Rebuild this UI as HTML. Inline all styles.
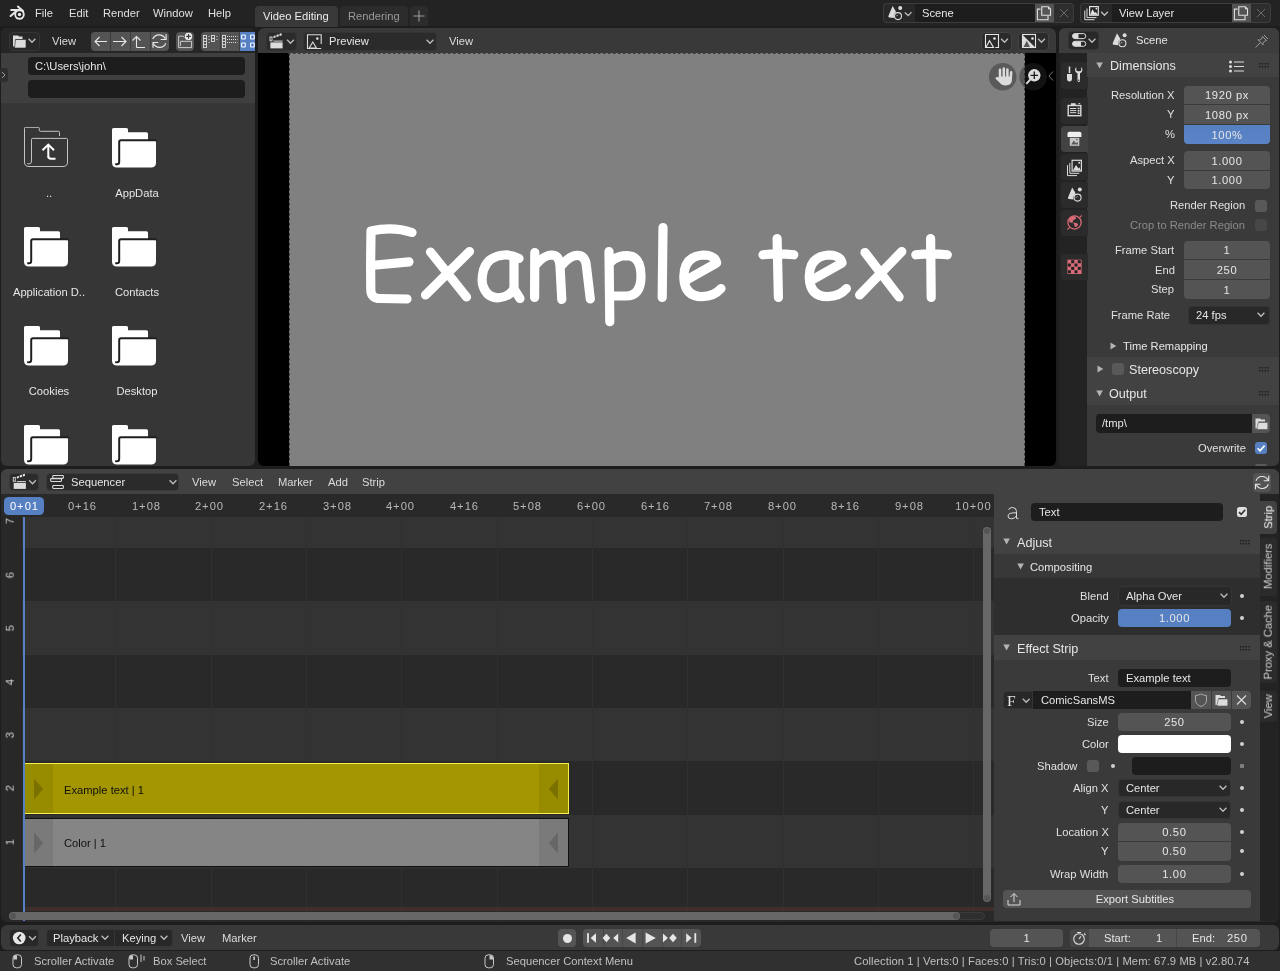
<!DOCTYPE html><html><head><meta charset="utf-8"><style>
html,body{margin:0;padding:0;width:1280px;height:971px;overflow:hidden;background:#1d1d1d;}
body{position:relative;font-family:"Liberation Sans", sans-serif;}
div,svg{position:absolute;box-sizing:border-box;}
.t{white-space:nowrap;line-height:1.117em;will-change:transform;}
</style></head><body>

<div style="left:0px;top:0px;width:1280px;height:26px;background:#232323;"></div>
<svg style="left:6px;top:3px;" width="24" height="21" viewBox="0 0 24 21"><g stroke="#e8e8e8" stroke-width="2" fill="none" stroke-linecap="round"><path d="M11.9 3.6 L17.2 8.2"/><path d="M5.2 6.9 H15.6"/><path d="M4.6 13 L9.8 8.6"/></g>
<circle cx="13.5" cy="11.5" r="5.2" fill="#e8e8e8"/><circle cx="13.5" cy="11.5" r="3.3" fill="#161616"/><circle cx="13.5" cy="11.5" r="1.8" fill="#e8e8e8"/></svg>
<div class="t" style="left:35.3px;top:6.86px;font-size:11.2px;color:#e0e0e0;">File</div>
<div class="t" style="left:68.5px;top:6.86px;font-size:11.2px;color:#e0e0e0;">Edit</div>
<div class="t" style="left:102.5px;top:6.86px;font-size:11.2px;color:#e0e0e0;">Render</div>
<div class="t" style="left:152.5px;top:6.86px;font-size:11.2px;color:#e0e0e0;">Window</div>
<div class="t" style="left:207.5px;top:6.86px;font-size:11.2px;color:#e0e0e0;">Help</div>
<div style="left:255px;top:6px;width:83px;height:21px;background:#393939;border-radius:4px 4px 0 0;"></div>
<div class="t" style="left:263px;top:9.86px;font-size:11.2px;color:#ececec;">Video Editing</div>
<div style="left:340px;top:6px;width:68px;height:20px;background:#2c2c2c;border-radius:4px 4px 0 0;"></div>
<div class="t" style="left:348.3px;top:9.86px;font-size:11.2px;color:#9a9a9a;">Rendering</div>
<div style="left:410px;top:6px;width:18px;height:20px;background:#2c2c2c;border-radius:4px 4px 0 0;"></div>
<svg style="left:410px;top:6px;" width="18" height="20" viewBox="0 0 18 20"><path d="M9 4.5V15.5M3.5 10H14.5" stroke="#9a9a9a" stroke-width="1.1"/></svg>
<div style="left:883px;top:3px;width:191px;height:19.5px;background:#3d3d3d;border-radius:4px;"></div>
<div style="left:884px;top:4px;width:31px;height:17.5px;background:#282828;border-radius:3px 0 0 3px;"></div>
<div style="left:915px;top:4px;width:120px;height:17.5px;background:#1d1d1d;"></div>
<div style="left:1035px;top:4px;width:19px;height:17.5px;background:#545454;"></div>
<div style="left:1054px;top:4px;width:19px;height:17.5px;background:#2d2d2d;border-radius:0 3px 3px 0;"></div>
<div class="t" style="left:921.5px;top:6.86px;font-size:11.2px;color:#e6e6e6;">Scene</div>
<svg style="left:884px;top:4px;" width="31" height="17" viewBox="0 0 31 17"><g transform="translate(4.1,2)"><path d="M4.5 0 L7.8 5.6 L5.6 12.1 L1.3 11.6 Q-0.3 11.3 0.3 9.9Z" fill="#dcdcdc"/><circle cx="12.1" cy="2" r="2" fill="#dcdcdc"/><circle cx="9.9" cy="10.1" r="4.2" fill="#282828"/><circle cx="9.9" cy="10.1" r="3.5" fill="#282828" stroke="#dcdcdc" stroke-width="1.1"/><path d="M8.3 10.2 L9.6 8.9" stroke="#dcdcdc" stroke-width="0.9"/></g><path d="M20.8 8.4L24.3 11.6L27.5 8.1" fill="none" stroke="#bdbdbd" stroke-width="1.3"/></svg>
<svg style="left:1035px;top:4px;" width="19" height="17" viewBox="0 0 19 17"><path d="M6.75 2.8 H13.3 L15.5 5 V11.3 H6.75 Z M5.5 5.1 H2.4 V15.7 H13 V12" fill="none" stroke="#e0e0e0" stroke-width="1.1"/><path d="M13 2.8 L15.5 5.3 H13Z" fill="#e0e0e0"/></svg>
<svg style="left:1054px;top:4px;" width="20" height="17" viewBox="0 0 20 17"><path d="M6 5L14 13M14 5L6 13" stroke="#6a6a6a" stroke-width="1"/></svg>
<div style="left:1080px;top:3px;width:191px;height:19.5px;background:#3d3d3d;border-radius:4px;"></div>
<div style="left:1081px;top:4px;width:31px;height:17.5px;background:#282828;border-radius:3px 0 0 3px;"></div>
<div style="left:1112px;top:4px;width:120px;height:17.5px;background:#1d1d1d;"></div>
<div style="left:1232px;top:4px;width:19px;height:17.5px;background:#545454;"></div>
<div style="left:1251px;top:4px;width:19px;height:17.5px;background:#2d2d2d;border-radius:0 3px 3px 0;"></div>
<div class="t" style="left:1118.5px;top:6.86px;font-size:11.2px;color:#e6e6e6;">View Layer</div>
<svg style="left:1081px;top:4px;" width="31" height="17" viewBox="0 0 31 17"><path d="M6 4.5 V13.6 H15.5 M3.8 6.5 V15.7 H13.5" fill="none" stroke="#dcdcdc" stroke-width="1"/><rect x="8.6" y="2.6" width="8.7" height="8.6" fill="#282828" stroke="#e6e6e6" stroke-width="1.2"/><path d="M9.2 10.8 L11.5 5.2 L13.8 9 L14.8 8 L16.7 10.8Z" fill="#e6e6e6"/><circle cx="15.4" cy="4.6" r="0.9" fill="#e6e6e6"/>
<path d="M20.10 7.80L23.50 11.30L26.90 7.80" fill="none" stroke="#bdbdbd" stroke-width="1.3"/></svg>
<svg style="left:1232px;top:4px;" width="19" height="17" viewBox="0 0 19 17"><path d="M6.75 2.8 H13.3 L15.5 5 V11.3 H6.75 Z M5.5 5.1 H2.4 V15.7 H13 V12" fill="none" stroke="#e0e0e0" stroke-width="1.1"/><path d="M13 2.8 L15.5 5.3 H13Z" fill="#e0e0e0"/></svg>
<svg style="left:1251px;top:4px;" width="20" height="17" viewBox="0 0 20 17"><path d="M6 5L14 13M14 5L6 13" stroke="#6a6a6a" stroke-width="1"/></svg>
<div style="left:1px;top:28px;width:254px;height:438px;background:#363636;border-radius:6px;"></div>
<div style="left:1px;top:28px;width:254px;height:25px;background:#262626;border-radius:6px 6px 0 0;"></div>
<div style="left:8.5px;top:31.5px;width:31px;height:19px;background:#282828;border-radius:4px;border:1px solid #363636;"></div>
<svg style="left:8px;top:31px;" width="32" height="20" viewBox="0 0 32 20"><path d="M5 4.5H10L11 5.5H14.5V8H7.5V15.5H5Z" fill="#dcdcdc"/><path d="M6.5 16.5 Q7.5 8.5 7.5 8.5H18V16Q18 17 17 17H7Z" fill="#dcdcdc" stroke="#282828" stroke-width="0.6"/>
<path d="M20.60 7.80L24.00 11.30L27.40 7.80" fill="none" stroke="#bdbdbd" stroke-width="1.3"/></svg>
<div class="t" style="left:52px;top:34.86px;font-size:11.2px;color:#dcdcdc;">View</div>
<div style="left:90.5px;top:32px;width:78px;height:18.5px;background:#545454;border-radius:4px;"></div>
<div style="left:109.5px;top:32px;width:1px;height:18.5px;background:#3d3d3d;"></div>
<div style="left:129.5px;top:32px;width:1px;height:18.5px;background:#3d3d3d;"></div>
<div style="left:149.5px;top:32px;width:1px;height:18.5px;background:#3d3d3d;"></div>
<svg style="left:90.5px;top:32px;" width="78" height="19" viewBox="0 0 78 19"><g fill="none" stroke="#e6e6e6" stroke-width="1.1">
<path d="M4 9.5H16M8.5 5L4 9.5L8.5 14"/>
<path d="M22 9.5H35M30.5 5L35 9.5L30.5 14"/>
<path d="M45.5 15.5V4.5M41.5 8.5L45.5 4.5L49.5 8.5M45.5 15.5H54"/>
<path d="M61.8 7 A6.8 6.8 0 0 1 74.2 6.8 M74.8 11.2 A6.8 6.8 0 0 1 62.4 11.6" stroke-width="1.2"/>
<path d="M75.1 2.2V7.5H69.7 M62 15.8V10.5H67.3" stroke-width="1.2"/></g></svg>
<div style="left:176px;top:32px;width:18px;height:18.5px;background:#545454;border-radius:4px;"></div>
<svg style="left:176px;top:32px;" width="18" height="19" viewBox="0 0 18 19"><path d="M2.6 15.6 V4.2 H7.2 L8.2 5.5 M2.6 15.6 H15.6 V9.3 H4.4 V14" fill="none" stroke="#cdcdcd" stroke-width="1"/><circle cx="12.5" cy="4.4" r="3.7" fill="#ececec"/><path d="M12.5 2.1 V6.7 M10.2 4.4 H14.8" stroke="#3a3a3a" stroke-width="1.1"/></svg>
<div style="left:201px;top:32px;width:54px;height:18.5px;background:#545454;border-radius:4px 0 0 4px;"></div>
<div style="left:219.5px;top:32px;width:1px;height:18.5px;background:#3d3d3d;"></div>
<div style="left:238.5px;top:32px;width:1px;height:18.5px;background:#3d3d3d;"></div>
<div style="left:239.5px;top:32px;width:15.5px;height:18.5px;background:#5680c2;"></div>
<svg style="left:201px;top:32px;" width="54" height="19" viewBox="0 0 54 19"><g fill="none" stroke="#dcdcdc" stroke-width="0.9">
<rect x="2.5" y="3.5" width="3" height="12"/><path d="M2.5 6.5H5.5M2.5 9.5H5.5M2.5 12.5H5.5"/>
<rect x="10.5" y="3.5" width="3" height="6"/><path d="M10.5 6.5H13.5"/>
<rect x="21.5" y="3.5" width="3" height="12"/><path d="M21.5 6.5H24.5M21.5 9.5H24.5M21.5 12.5H24.5"/></g>
<g fill="#dcdcdc"><rect x="7.5" y="4" width="1" height="1"/><rect x="7.5" y="7" width="1" height="1"/><rect x="7.5" y="10" width="1" height="1"/>
<rect x="15.5" y="4" width="1" height="1"/><rect x="15.5" y="7" width="1" height="1"/>
</g><path d="M26 4.5H36.5M26 7.5H36.5M26 10.5H36.5" stroke="#dcdcdc" stroke-width="1" stroke-dasharray="1 1" fill="none"/>
<g fill="#3a6cc0" stroke="#ffffff" stroke-width="1.2"><rect x="40.7" y="3" width="3.5" height="4" rx="0.4"/><rect x="49.7" y="3" width="3.5" height="4" rx="0.4"/><rect x="40.7" y="11" width="3.5" height="4" rx="0.4"/><rect x="49.7" y="11" width="3.5" height="4" rx="0.4"/></g></svg>
<div style="left:1px;top:53px;width:254px;height:50px;background:#3f3f3f;"></div>
<div style="left:27.5px;top:57px;width:217.5px;height:18px;background:#1d1d1d;border-radius:4px;"></div>
<div class="t" style="left:34.5px;top:59.86px;font-size:11.2px;color:#e6e6e6;">C:\Users\john\</div>
<div style="left:27.5px;top:80px;width:217.5px;height:18px;background:#1d1d1d;border-radius:4px;"></div>
<div style="left:0px;top:68px;width:8px;height:14px;background:#2e2e2e;border-radius:0 3px 3px 0;"></div>
<svg style="left:0px;top:68px;" width="8" height="14" viewBox="0 0 8 14"><path d="M2 4L5 7L2 10" fill="none" stroke="#9a9a9a" stroke-width="1"/></svg>
<svg style="left:24px;top:127px;" width="46" height="42" viewBox="0 0 46 42"><path d="M35.5 9 V5.3 Q35.5 4.3 34.5 4.3 H16.3 Q15.3 4.3 15.3 3.3 V1.3 Q15.3 0.3 14.3 0.3 H1.5 Q0.5 0.3 0.5 1.3 V35 Q0.5 39.5 5 39.5 H39 Q43.5 39.5 43.5 35 V12.4 Q43.5 11.4 42.5 11.4 H8.5 Q7.5 11.4 7.5 12.4 V34 Q7.5 37 5 37 Q3.5 37 3 36.2" fill="none" stroke="#c4c4c4" stroke-width="1"/>
<path d="M24.3 31 V18.5 M18.5 23.2 L24.3 17.6 L30 23.2 M24.3 29 Q24.3 31.8 27 31.8 H31.5" fill="none" stroke="#ffffff" stroke-width="2"/></svg>
<div class="t" style="left:-11.0px;width:120px;top:187.36px;font-size:11.2px;color:#e6e6e6;text-align:center;">..</div>
<svg style="left:112px;top:127.5px;" width="45" height="41" viewBox="0 0 45 41"><path d="M1.5 0 H14.5 Q16 0 16 1.5 V4.3 H34.5 Q36 4.3 36 5.8 V12.5 H42.5 Q44 12.5 44 14 V34.5 Q44 39.5 39 39.5 H5 Q0 39.5 0 34.5 V1.5 Q0 0 1.5 0Z" fill="#ffffff"/>
<path d="M44.5 12.2 H9 Q7.2 12.2 7.2 14 V33.8 Q7.2 36.3 5 36.3 H3.2" fill="none" stroke="#1f1f1f" stroke-width="2"/></svg>
<div class="t" style="left:77.0px;width:120px;top:187.36px;font-size:11.2px;color:#e6e6e6;text-align:center;">AppData</div>
<svg style="left:24px;top:226.5px;" width="45" height="41" viewBox="0 0 45 41"><path d="M1.5 0 H14.5 Q16 0 16 1.5 V4.3 H34.5 Q36 4.3 36 5.8 V12.5 H42.5 Q44 12.5 44 14 V34.5 Q44 39.5 39 39.5 H5 Q0 39.5 0 34.5 V1.5 Q0 0 1.5 0Z" fill="#ffffff"/>
<path d="M44.5 12.2 H9 Q7.2 12.2 7.2 14 V33.8 Q7.2 36.3 5 36.3 H3.2" fill="none" stroke="#1f1f1f" stroke-width="2"/></svg>
<div class="t" style="left:-11.0px;width:120px;top:286.36px;font-size:11.2px;color:#e6e6e6;text-align:center;">Application D..</div>
<svg style="left:112px;top:226.5px;" width="45" height="41" viewBox="0 0 45 41"><path d="M1.5 0 H14.5 Q16 0 16 1.5 V4.3 H34.5 Q36 4.3 36 5.8 V12.5 H42.5 Q44 12.5 44 14 V34.5 Q44 39.5 39 39.5 H5 Q0 39.5 0 34.5 V1.5 Q0 0 1.5 0Z" fill="#ffffff"/>
<path d="M44.5 12.2 H9 Q7.2 12.2 7.2 14 V33.8 Q7.2 36.3 5 36.3 H3.2" fill="none" stroke="#1f1f1f" stroke-width="2"/></svg>
<div class="t" style="left:77.0px;width:120px;top:286.36px;font-size:11.2px;color:#e6e6e6;text-align:center;">Contacts</div>
<svg style="left:24px;top:325.5px;" width="45" height="41" viewBox="0 0 45 41"><path d="M1.5 0 H14.5 Q16 0 16 1.5 V4.3 H34.5 Q36 4.3 36 5.8 V12.5 H42.5 Q44 12.5 44 14 V34.5 Q44 39.5 39 39.5 H5 Q0 39.5 0 34.5 V1.5 Q0 0 1.5 0Z" fill="#ffffff"/>
<path d="M44.5 12.2 H9 Q7.2 12.2 7.2 14 V33.8 Q7.2 36.3 5 36.3 H3.2" fill="none" stroke="#1f1f1f" stroke-width="2"/></svg>
<div class="t" style="left:-11.0px;width:120px;top:385.36px;font-size:11.2px;color:#e6e6e6;text-align:center;">Cookies</div>
<svg style="left:112px;top:325.5px;" width="45" height="41" viewBox="0 0 45 41"><path d="M1.5 0 H14.5 Q16 0 16 1.5 V4.3 H34.5 Q36 4.3 36 5.8 V12.5 H42.5 Q44 12.5 44 14 V34.5 Q44 39.5 39 39.5 H5 Q0 39.5 0 34.5 V1.5 Q0 0 1.5 0Z" fill="#ffffff"/>
<path d="M44.5 12.2 H9 Q7.2 12.2 7.2 14 V33.8 Q7.2 36.3 5 36.3 H3.2" fill="none" stroke="#1f1f1f" stroke-width="2"/></svg>
<div class="t" style="left:77.0px;width:120px;top:385.36px;font-size:11.2px;color:#e6e6e6;text-align:center;">Desktop</div>
<svg style="left:24px;top:424.5px;" width="45" height="41" viewBox="0 0 45 41"><path d="M1.5 0 H14.5 Q16 0 16 1.5 V4.3 H34.5 Q36 4.3 36 5.8 V12.5 H42.5 Q44 12.5 44 14 V34.5 Q44 39.5 39 39.5 H5 Q0 39.5 0 34.5 V1.5 Q0 0 1.5 0Z" fill="#ffffff"/>
<path d="M44.5 12.2 H9 Q7.2 12.2 7.2 14 V33.8 Q7.2 36.3 5 36.3 H3.2" fill="none" stroke="#1f1f1f" stroke-width="2"/></svg>
<div class="t" style="left:-11.0px;width:120px;top:484.36px;font-size:11.2px;color:#e6e6e6;text-align:center;"></div>
<svg style="left:112px;top:424.5px;" width="45" height="41" viewBox="0 0 45 41"><path d="M1.5 0 H14.5 Q16 0 16 1.5 V4.3 H34.5 Q36 4.3 36 5.8 V12.5 H42.5 Q44 12.5 44 14 V34.5 Q44 39.5 39 39.5 H5 Q0 39.5 0 34.5 V1.5 Q0 0 1.5 0Z" fill="#ffffff"/>
<path d="M44.5 12.2 H9 Q7.2 12.2 7.2 14 V33.8 Q7.2 36.3 5 36.3 H3.2" fill="none" stroke="#1f1f1f" stroke-width="2"/></svg>
<div class="t" style="left:77.0px;width:120px;top:484.36px;font-size:11.2px;color:#e6e6e6;text-align:center;"></div>
<div style="left:1px;top:466px;width:254px;height:3px;background:#1d1d1d;"></div>
<div style="left:258px;top:28px;width:798px;height:438px;background:#000000;border-radius:6px;"></div>
<div style="left:258px;top:28px;width:798px;height:25px;background:#393939;border-radius:6px 6px 0 0;"></div>
<div style="left:265.5px;top:31.5px;width:31px;height:19.5px;background:#2b2b2b;border-radius:4px;border:1px solid #343434;"></div>
<svg style="left:265.5px;top:31.5px;" width="31" height="19" viewBox="0 0 31 19"><g transform="translate(0,0)"><rect x="4.4" y="10.4" width="12.2" height="6" fill="#dcdcdc"/><path d="M7.5 9.1 H16.6" stroke="#dcdcdc" stroke-width="1"/><rect x="4" y="5" width="2" height="3.8" fill="none" stroke="#cfcfcf" stroke-width="1"/>
<g fill="#e6e6e6"><path d="M7.5 3.9 L9.6 3.4 L9.6 5.6 L7.5 6.1Z"/><path d="M10.5 2.8 L12.6 2.3 L12.6 4.5 L10.5 5Z"/><path d="M13.5 1.8 L15.6 1.3 L15.6 3.5 L13.5 4Z"/></g></g><path d="M21.10 7.80L24.50 11.30L27.90 7.80" fill="none" stroke="#bdbdbd" stroke-width="1.3"/></svg>
<div style="left:302.5px;top:31.5px;width:134px;height:19.5px;background:#2b2b2b;border-radius:4px;border:1px solid #343434;"></div>
<svg style="left:302.5px;top:31.5px;" width="134" height="19" viewBox="0 0 134 19"><path d="M18.2 16.5 H4.5 V2.7 H18.2 V12" fill="none" stroke="#dcdcdc" stroke-width="1.1"/><path d="M6.2 16 L9.8 10 L13.4 16 Z" fill="none" stroke="#dcdcdc" stroke-width="1.1"/><circle cx="14.3" cy="6.6" r="1.3" fill="#dcdcdc"/>
<path d="M123.60 7.80L127.00 11.30L130.40 7.80" fill="none" stroke="#bdbdbd" stroke-width="1.3"/></svg>
<div class="t" style="left:328.5px;top:34.86px;font-size:11.2px;color:#e6e6e6;">Preview</div>
<div class="t" style="left:449px;top:34.86px;font-size:11.2px;color:#dcdcdc;">View</div>
<div style="left:980.5px;top:31.5px;width:31px;height:19px;background:#2b2b2b;border-radius:4px;border:1px solid #434343;"></div>
<svg style="left:980px;top:31px;" width="31" height="19" viewBox="0 0 31 19"><path d="M15.3 16.5 H18.5 V3.5 H5.5 V16.5 H13.5 L9.5 9.7 L5.9 16.5" fill="none" stroke="#e6e6e6" stroke-width="1.1"/><circle cx="14.5" cy="7.5" r="1.3" fill="#e6e6e6"/>
<path d="M21.10 7.80L24.50 11.30L27.90 7.80" fill="none" stroke="#bdbdbd" stroke-width="1.3"/></svg>
<div style="left:1017.5px;top:31.5px;width:31px;height:19px;background:#2b2b2b;border-radius:4px;border:1px solid #434343;"></div>
<svg style="left:1017px;top:31px;" width="31" height="19" viewBox="0 0 31 19"><rect x="5.5" y="3.5" width="13" height="13" fill="#2b2b2b" stroke="#e6e6e6" stroke-width="1.1"/><path d="M5.5 3.7 L18.3 16.5 H5.5Z" fill="#dcdcdc"/><path d="M6.5 16 L9.8 9.8 L13 16Z" fill="#585858"/><circle cx="15.5" cy="7.5" r="1.3" fill="#e6e6e6"/>
<path d="M21.10 7.80L24.50 11.30L27.90 7.80" fill="none" stroke="#bdbdbd" stroke-width="1.3"/></svg>
<div style="left:289px;top:53px;width:736px;height:413px;background:#808080;"></div>
<svg style="left:288px;top:53px;" width="738" height="413" viewBox="0 0 738 413"><path d="M1.5 0 V413 M736.5 0 V413 M0 0.5 H738" fill="none" stroke="#3c3c3c" stroke-width="1" stroke-dasharray="2.5 2.5"/></svg>
<svg style="left:0;top:0" width="1280" height="971" viewBox="0 0 1280 971"><g fill="none" stroke="#ffffff" stroke-width="9.2" stroke-linecap="round" stroke-linejoin="round">
<path d="M412 232.5 Q393 226 371 231 L370.6 265.5 L370.8 290 Q371 298.5 380 298.5 L407 299"/>
<path d="M371 265.5 L409 261.8"/>
<path d="M430.5 252 L466.5 297 M469.5 251.5 L425.5 295"/>
<path d="M519 258.5 Q512 254.5 504.6 255 Q488 256 483.5 270 Q481 280 483 286 Q487 297.8 498 297.8 Q508 297.5 514 289"/>
<path d="M514 260 L514 289 L520 298.5"/>
<path d="M534.8 252.5 L534.6 297.5 M535.5 265 Q544 255 552 255 Q559.5 255.5 560 266 L561.8 299.5 M561 266 Q570 255 578 255.3 Q585.5 256 586.4 266 L590.3 299"/>
<path d="M609 251.5 L609.8 321.7 M609.8 263 Q616 255.6 627 255.6 Q641 256 641 276 Q641 296 626 296 L610 296"/>
<path d="M663 227.5 L662.2 297.5"/>
<path id="e1" d="M687.4 279.6 L716.6 263 Q715 255 703 255 Q684 256.5 683.8 277 Q684.5 296.6 702 296.6 Q714 296.6 721 288.5"/>
<path d="M777.1 238.5 L778.4 297.5 M763 254.8 Q778 253 793.8 254.8"/>
<path d="M812.8 279.6 L842 263 Q840.4 255 828.4 255 Q809.4 256.5 809.2 277 Q809.9 296.6 827.4 296.6 Q839.4 296.6 846.4 288.5"/>
<path d="M865 252.5 L899.1 297 M901.8 251.5 L859.6 295"/>
<path d="M930.6 238.5 L931.2 297.5 M915.8 254.8 Q931 253 947.3 254.8"/>
</g></svg>
<svg style="left:985px;top:59px;" width="70" height="36" viewBox="0 0 70 36"><circle cx="17.7" cy="17.7" r="13.8" fill="rgb(41,41,41)" fill-opacity="0.44"/><circle cx="48.2" cy="17.7" r="13.8" fill="rgb(41,41,41)" fill-opacity="0.44"/>
<g stroke="#dcdcdc" stroke-width="2.5" stroke-linecap="round"><path d="M15 19 V10.8 M18.8 19 V9.6 M22.4 19 V10.4 M25.7 19.5 L26.2 13.2"/></g>
<path d="M13.6 17.5 H27 V20.5 Q27 26.4 20.5 26.4 Q16.5 26.4 14.5 23.5 L10.8 20 Q10 19 11.1 18.3 Q12.3 17.6 13.6 18.8Z" fill="#dcdcdc"/>
<circle cx="49.3" cy="16.3" r="6.2" fill="#dcdcdc"/><path d="M45 20.8 L41.8 24.3" stroke="#dcdcdc" stroke-width="2" stroke-linecap="round"/><path d="M49.3 12.6V20M45.6 16.3H53" stroke="#1a1a1a" stroke-width="1.3"/></svg>
<svg style="left:1046px;top:68px;" width="10" height="16" viewBox="0 0 10 16"><path d="M7 3.5L3 8L7 12.5" fill="none" stroke="#7a7a7a" stroke-width="1"/></svg>
<div style="left:1059px;top:28px;width:220px;height:438px;background:#3a3a3a;border-radius:6px;"></div>
<div style="left:1059px;top:28px;width:220px;height:25px;background:#3d3d3d;border-radius:6px 6px 0 0;"></div>
<div style="left:1068px;top:31px;width:30.5px;height:19px;background:#282828;border-radius:4px;border:1px solid #333;"></div>
<svg style="left:1068px;top:31px;" width="31" height="19" viewBox="0 0 31 19"><rect x="4.5" y="2.6" width="13.3" height="5" rx="2.5" fill="#282828" stroke="#dcdcdc" stroke-width="1"/><path d="M6.8 2.8 H10.5 V7.4 H6.8 A2.3 2.3 0 0 1 6.8 2.8Z" fill="#dcdcdc"/>
<rect x="4.5" y="10.3" width="13.3" height="5" rx="2.5" fill="#282828" stroke="#dcdcdc" stroke-width="1"/><path d="M6.8 10.5 H13 V15.1 H6.8 A2.3 2.3 0 0 1 6.8 10.5Z" fill="#dcdcdc"/>
<path d="M20.60 7.80L24.00 11.30L27.40 7.80" fill="none" stroke="#bdbdbd" stroke-width="1.3"/></svg>
<svg style="left:1111px;top:32px;" width="18" height="16" viewBox="0 0 18 16"><g transform="translate(1.5,1.2)"><path d="M4.5 0 L7.8 5.6 L5.6 12.1 L1.3 11.6 Q-0.3 11.3 0.3 9.9Z" fill="#dcdcdc"/><circle cx="12.1" cy="2" r="2" fill="#dcdcdc"/><circle cx="9.9" cy="10.1" r="4.2" fill="#3d3d3d"/><circle cx="9.9" cy="10.1" r="3.5" fill="#3d3d3d" stroke="#dcdcdc" stroke-width="1.1"/><path d="M8.3 10.2 L9.6 8.9" stroke="#dcdcdc" stroke-width="0.9"/></g></svg>
<div class="t" style="left:1136.3px;top:34.06px;font-size:11.2px;color:#e6e6e6;">Scene</div>
<svg style="left:1254px;top:32px;" width="17" height="17" viewBox="0 0 17 17"><path d="M8.5 4.5 L12.5 8.5 L10.8 9 L8.8 11.3 L9.3 13 L4 7.7 L5.7 8.2 L8 6.2 Z M10 3 L14 7" fill="none" stroke="#9a9a9a" stroke-width="1"/><path d="M6.5 10.5 L1.5 15.5" stroke="#9a9a9a" stroke-width="1"/></svg>
<div style="left:1059px;top:53px;width:28px;height:413px;background:#232323;border-radius:0 0 0 6px;"></div>
<div style="left:1060.5px;top:62px;width:27px;height:27px;background:#2b2b2b;border-radius:4px 0 0 4px;"></div>
<svg style="left:1060.5px;top:62px;" width="27" height="27" viewBox="0 0 27 27"><path d="M8.5 4.5 V11" stroke="#dcdcdc" stroke-width="1.5"/><path d="M6 12 H11 V16.5 Q11 19.5 8.5 19.5 Q6 19.5 6 16.5Z" fill="#dcdcdc"/>
<path d="M15.3 5 Q13.8 6.3 14 8.5 Q14.5 10.7 16.5 11.3 V18.5 Q16.5 20 17.7 20 Q19 20 19 18.5 V11.3 Q21 10.7 21.4 8.5 Q21.7 6.3 20.2 5 V8.3 Q20.2 9.3 17.7 9.3 Q15.3 9.3 15.3 8.3Z" fill="#dcdcdc"/><circle cx="17.7" cy="18.3" r="0.7" fill="#2b2b2b"/></svg>
<div style="left:1060.5px;top:98px;width:27px;height:26px;background:#2b2b2b;border-radius:4px 0 0 4px;"></div>
<svg style="left:1060.5px;top:98px;" width="27" height="26" viewBox="0 0 27 26"><rect x="7.2" y="7.5" width="12.6" height="10.2" fill="none" stroke="#dcdcdc" stroke-width="1.4"/><rect x="10" y="5.2" width="4.6" height="2.4" fill="#dcdcdc"/><path d="M17.5 5.6 H19.2" stroke="#dcdcdc" stroke-width="1"/>
<path d="M9 10.5 H15.3 M9 12.6 H15.3 M9 14.7 H15.3" stroke="#dcdcdc" stroke-width="1"/><rect x="16.7" y="9.6" width="1.8" height="1.6" fill="#dcdcdc"/><rect x="16.7" y="12" width="1.8" height="1.6" fill="#dcdcdc"/><rect x="16.7" y="14.4" width="1.8" height="1.6" fill="#dcdcdc"/></svg>
<div style="left:1060.5px;top:126px;width:27px;height:26px;background:#424242;border-radius:4px 0 0 4px;"></div>
<svg style="left:1060.5px;top:126px;" width="27" height="26" viewBox="0 0 27 26"><path d="M6.5 11 V7.6 Q6.5 5.7 8.4 5.7 H18.5 Q20.4 5.7 20.4 7.6 V11Z" fill="#f0f0f0"/><rect x="8.8" y="11.8" width="9.5" height="8" fill="#c8c8c8"/><path d="M10.2 18.6 L12.8 14.6 L15 17.2 L16.5 15.8 L17.2 18.6Z" fill="#5a5a5a"/><circle cx="15.8" cy="13.6" r="0.8" fill="#5a5a5a"/></svg>
<div style="left:1060.5px;top:154px;width:27px;height:26px;background:#2b2b2b;border-radius:4px 0 0 4px;"></div>
<svg style="left:1060.5px;top:154px;" width="27" height="26" viewBox="0 0 27 26"><path d="M8.8 9 V19.3 H18.3 M6.5 11.2 V21.6 H16" fill="none" stroke="#dcdcdc" stroke-width="1"/><rect x="11.1" y="6.3" width="9.3" height="10.8" fill="#2b2b2b" stroke="#dcdcdc" stroke-width="1.2"/><path d="M11.8 16.5 L15 11 L17.5 14.5 L18.5 13.3 L19.8 16.5Z" fill="#dcdcdc"/><circle cx="18.2" cy="8.8" r="1" fill="#dcdcdc"/></svg>
<div style="left:1060.5px;top:182.4px;width:27px;height:26.0px;background:#2b2b2b;border-radius:4px 0 0 4px;"></div>
<svg style="left:1060.5px;top:182.4px;" width="27" height="26.0" viewBox="0 0 27 26.0"><g transform="translate(6.7,5.5)"><path d="M4.5 0 L7.8 5.6 L5.6 12.1 L1.3 11.6 Q-0.3 11.3 0.3 9.9Z" fill="#dcdcdc"/><circle cx="12.1" cy="2" r="2" fill="#dcdcdc"/><circle cx="9.9" cy="10.1" r="4.2" fill="#2b2b2b"/><circle cx="9.9" cy="10.1" r="3.5" fill="#2b2b2b" stroke="#dcdcdc" stroke-width="1.1"/><path d="M8.3 10.2 L9.6 8.9" stroke="#dcdcdc" stroke-width="0.9"/></g></svg>
<div style="left:1060.5px;top:210.4px;width:27px;height:25.599999999999994px;background:#2b2b2b;border-radius:4px 0 0 4px;"></div>
<svg style="left:1060.5px;top:210.4px;" width="27" height="25.599999999999994" viewBox="0 0 27 25.599999999999994"><circle cx="13.55" cy="12.5" r="6.6" fill="none" stroke="#d86b77" stroke-width="1.3"/><path d="M6.4 19.5 L8.6 17.3 M18.5 7.6 L20.7 5.5" stroke="#d86b77" stroke-width="1.1"/>
<path d="M8.2 9.5 Q9.5 6.8 13 6.3 Q15.3 6.8 15 8.5 Q13.8 9.5 12.5 10 Q11.5 11 12 12.3 Q10.5 13 9 12.5 Q8 11.5 8.2 9.5Z" fill="#d86b77"/><path d="M12 12.8 Q15 12.3 17 13.8 Q17.3 15.5 15.8 16.5 Q14.3 17.5 13.7 16.5 Q13.5 14.5 12 12.8Z" fill="#d86b77"/></svg>
<div style="left:1060.5px;top:254px;width:27px;height:26px;background:#2b2b2b;border-radius:4px 0 0 4px;"></div>
<svg style="left:1060.5px;top:254px;" width="27" height="26" viewBox="0 0 27 26"><rect x="6.4" y="5.7" width="14.2" height="14.3" fill="#d86b77"/><rect x="6.9" y="9.55" width="3" height="3" fill="#1f2422"/><rect x="6.9" y="16.25" width="3" height="3" fill="#1f2422"/><rect x="10.2" y="6.2" width="3" height="3" fill="#1f2422"/><rect x="10.2" y="12.9" width="3" height="3" fill="#1f2422"/><rect x="13.5" y="9.55" width="3" height="3" fill="#1f2422"/><rect x="13.5" y="16.25" width="3" height="3" fill="#1f2422"/><rect x="16.799999999999997" y="6.2" width="3" height="3" fill="#1f2422"/><rect x="16.799999999999997" y="12.9" width="3" height="3" fill="#1f2422"/></svg>
<div style="left:1087px;top:53px;width:192px;height:24px;background:#424242;"></div>
<svg style="left:1095.7px;top:61.599999999999994px;" width="9" height="9" viewBox="0 0 9 9"><path d="M0.3 0.5 H6.9 L3.6 6.5Z" fill="#b4b4b4"/></svg>
<div class="t" style="left:1109.5px;top:59.00px;font-size:12.6px;color:#e6e6e6;">Dimensions</div>
<svg style="left:1259px;top:63.0px;" width="12" height="6" viewBox="0 0 12 6"><rect x="0.0" y="0" width="1.4" height="1.4" fill="#1a1a1a"/><rect x="0.0" y="3" width="1.4" height="1.4" fill="#1a1a1a"/><rect x="2.8" y="0" width="1.4" height="1.4" fill="#1a1a1a"/><rect x="2.8" y="3" width="1.4" height="1.4" fill="#1a1a1a"/><rect x="5.6" y="0" width="1.4" height="1.4" fill="#1a1a1a"/><rect x="5.6" y="3" width="1.4" height="1.4" fill="#1a1a1a"/><rect x="8.399999999999999" y="0" width="1.4" height="1.4" fill="#1a1a1a"/><rect x="8.399999999999999" y="3" width="1.4" height="1.4" fill="#1a1a1a"/></svg>
<svg style="left:1228px;top:60px;" width="18" height="14" viewBox="0 0 18 14"><circle cx="2.5" cy="2" r="1.5" fill="#dcdcdc"/><circle cx="2.5" cy="6.5" r="1.5" fill="#dcdcdc"/><circle cx="2.5" cy="11" r="1.5" fill="#dcdcdc"/><path d="M6 2H16M6 6.5H16M6 11H16" stroke="#dcdcdc" stroke-width="1.1"/></svg>
<div style="left:1184px;top:86px;width:86px;height:18.299999999999997px;background:#545454;border-radius:4px 4px 0 0;"></div>
<div class="t" style="left:1184.0px;width:86px;top:89.21px;font-size:11.2px;color:#e6e6e6;text-align:center;letter-spacing:0.6px;">1920 px</div>
<div style="left:1184px;top:105.2px;width:86px;height:18.700000000000003px;background:#545454;border-radius:0;"></div>
<div class="t" style="left:1184.0px;width:86px;top:108.61px;font-size:11.2px;color:#e6e6e6;text-align:center;letter-spacing:0.6px;">1080 px</div>
<div style="left:1184px;top:124.9px;width:86px;height:19.099999999999994px;background:linear-gradient(#5680c2,#5a84c6);border-radius:0 0 4px 4px;"></div>
<div class="t" style="left:1184.0px;width:86px;top:128.51px;font-size:11.2px;color:#e6e6e6;text-align:center;letter-spacing:0.6px;">100%</div>
<div class="t" style="right:105.5px;top:89.06px;font-size:11.2px;color:#e0e0e0;text-align:right;">Resolution X</div>
<div class="t" style="right:105.5px;top:108.46px;font-size:11.2px;color:#e0e0e0;text-align:right;">Y</div>
<div class="t" style="right:105.5px;top:128.36px;font-size:11.2px;color:#e0e0e0;text-align:right;">%</div>
<div style="left:1184px;top:151.4px;width:86px;height:18.19999999999999px;background:#545454;border-radius:4px 4px 0 0;"></div>
<div class="t" style="left:1184.0px;width:86px;top:154.56px;font-size:11.2px;color:#e6e6e6;text-align:center;letter-spacing:0.6px;">1.000</div>
<div style="left:1184px;top:170.5px;width:86px;height:18.5px;background:#545454;border-radius:0 0 4px 4px;"></div>
<div class="t" style="left:1184.0px;width:86px;top:173.81px;font-size:11.2px;color:#e6e6e6;text-align:center;letter-spacing:0.6px;">1.000</div>
<div class="t" style="right:105.5px;top:154.36px;font-size:11.2px;color:#e0e0e0;text-align:right;">Aspect X</div>
<div class="t" style="right:105.5px;top:173.66px;font-size:11.2px;color:#e0e0e0;text-align:right;">Y</div>
<div class="t" style="right:34.5px;top:199.06px;font-size:11.2px;color:#e0e0e0;text-align:right;">Render Region</div>
<div style="left:1255px;top:199.5px;width:12px;height:12px;background:#595959;border-radius:3px;"></div>
<div class="t" style="right:34.5px;top:219.06px;font-size:11.2px;color:#8a8a8a;text-align:right;">Crop to Render Region</div>
<div style="left:1255px;top:219.2px;width:12px;height:12px;background:#474747;border-radius:3px;"></div>
<div style="left:1184px;top:241px;width:86px;height:18.30000000000001px;background:#545454;border-radius:4px 4px 0 0;"></div>
<div class="t" style="left:1184.0px;width:86px;top:244.21px;font-size:11.2px;color:#e6e6e6;text-align:center;letter-spacing:0.6px;">1</div>
<div style="left:1184px;top:260.2px;width:86px;height:18.80000000000001px;background:#545454;border-radius:0;"></div>
<div class="t" style="left:1184.0px;width:86px;top:263.66px;font-size:11.2px;color:#e6e6e6;text-align:center;letter-spacing:0.6px;">250</div>
<div style="left:1184px;top:280px;width:86px;height:19.19999999999999px;background:#545454;border-radius:0 0 4px 4px;"></div>
<div class="t" style="left:1184.0px;width:86px;top:283.66px;font-size:11.2px;color:#e6e6e6;text-align:center;letter-spacing:0.6px;">1</div>
<div class="t" style="right:105.5px;top:244.16px;font-size:11.2px;color:#e0e0e0;text-align:right;">Frame Start</div>
<div class="t" style="right:105.5px;top:263.66px;font-size:11.2px;color:#e0e0e0;text-align:right;">End</div>
<div class="t" style="right:105.5px;top:283.36px;font-size:11.2px;color:#e0e0e0;text-align:right;">Step</div>
<div class="t" style="right:109.5px;top:309.16px;font-size:11.2px;color:#e0e0e0;text-align:right;">Frame Rate</div>
<div style="left:1187.5px;top:305.8px;width:82.5px;height:19px;background:#282828;border-radius:4px;border:1px solid #333;"></div>
<div class="t" style="left:1195.5px;top:309.16px;font-size:11.2px;color:#e6e6e6;">24 fps</div>
<svg style="left:1256px;top:310px;" width="12" height="10" viewBox="0 0 12 10"><path d="M1.60 2.80L5.00 6.30L8.40 2.80" fill="none" stroke="#bdbdbd" stroke-width="1.3"/></svg>
<svg style="left:1109.8px;top:342px;" width="9" height="9" viewBox="0 0 9 9"><path d="M0.5 0.4 L6.3 4 L0.5 7.6Z" fill="#b4b4b4"/></svg>
<div class="t" style="left:1123px;top:339.86px;font-size:11.2px;color:#e6e6e6;">Time Remapping</div>
<div style="left:1087px;top:356.5px;width:192px;height:24.5px;background:#424242;"></div>
<svg style="left:1096.8px;top:364.55px;" width="9" height="9" viewBox="0 0 9 9"><path d="M0.5 0.4 L6.3 4 L0.5 7.6Z" fill="#b4b4b4"/></svg>
<div class="t" style="left:1129.3px;top:362.75px;font-size:12.6px;color:#e6e6e6;">Stereoscopy</div>
<svg style="left:1259px;top:366.75px;" width="12" height="6" viewBox="0 0 12 6"><rect x="0.0" y="0" width="1.4" height="1.4" fill="#1a1a1a"/><rect x="0.0" y="3" width="1.4" height="1.4" fill="#1a1a1a"/><rect x="2.8" y="0" width="1.4" height="1.4" fill="#1a1a1a"/><rect x="2.8" y="3" width="1.4" height="1.4" fill="#1a1a1a"/><rect x="5.6" y="0" width="1.4" height="1.4" fill="#1a1a1a"/><rect x="5.6" y="3" width="1.4" height="1.4" fill="#1a1a1a"/><rect x="8.399999999999999" y="0" width="1.4" height="1.4" fill="#1a1a1a"/><rect x="8.399999999999999" y="3" width="1.4" height="1.4" fill="#1a1a1a"/></svg>
<div style="left:1111.5px;top:362.5px;width:12px;height:12px;background:#595959;border-radius:3px;"></div>
<div style="left:1087px;top:381px;width:192px;height:24px;background:#424242;"></div>
<svg style="left:1095.7px;top:389.6px;" width="9" height="9" viewBox="0 0 9 9"><path d="M0.3 0.5 H6.9 L3.6 6.5Z" fill="#b4b4b4"/></svg>
<div class="t" style="left:1109.2px;top:387.00px;font-size:12.6px;color:#e6e6e6;">Output</div>
<svg style="left:1259px;top:391.0px;" width="12" height="6" viewBox="0 0 12 6"><rect x="0.0" y="0" width="1.4" height="1.4" fill="#1a1a1a"/><rect x="0.0" y="3" width="1.4" height="1.4" fill="#1a1a1a"/><rect x="2.8" y="0" width="1.4" height="1.4" fill="#1a1a1a"/><rect x="2.8" y="3" width="1.4" height="1.4" fill="#1a1a1a"/><rect x="5.6" y="0" width="1.4" height="1.4" fill="#1a1a1a"/><rect x="5.6" y="3" width="1.4" height="1.4" fill="#1a1a1a"/><rect x="8.399999999999999" y="0" width="1.4" height="1.4" fill="#1a1a1a"/><rect x="8.399999999999999" y="3" width="1.4" height="1.4" fill="#1a1a1a"/></svg>
<div style="left:1087px;top:405px;width:192px;height:61px;background:#3a3a3a;border-radius:0 0 6px 0;"></div>
<div style="left:1095.5px;top:414px;width:156px;height:18.5px;background:#1d1d1d;border-radius:4px 0 0 4px;"></div>
<div class="t" style="left:1102px;top:417.26px;font-size:11.2px;color:#e6e6e6;">/tmp\</div>
<div style="left:1251.5px;top:414px;width:18.5px;height:18.5px;background:#545454;border-radius:0 4px 4px 0;"></div>
<svg style="left:1251.5px;top:414px;" width="19" height="19" viewBox="0 0 19 19"><path d="M3.5 4.5 H8 L9 5.5 H13 V7.5 H6.5 V14.5 H3.5Z" fill="#dcdcdc"/><path d="M5 15.5 Q6 8.5 6.5 8.5 H15.8 V14.5 Q15.8 15.5 14.8 15.5Z" fill="#dcdcdc" stroke="#545454" stroke-width="0.6"/></svg>
<div class="t" style="right:34.5px;top:442.36px;font-size:11.2px;color:#e0e0e0;text-align:right;">Overwrite</div>
<div style="left:1255px;top:441.8px;width:12px;height:12.5px;background:#5680c2;border-radius:3px;"></div>
<svg style="left:1255px;top:441.8px;" width="12" height="12.5" viewBox="0 0 12 12.5"><path d="M2.6 6.3 L5 8.8 L9.6 3.6" fill="none" stroke="#ffffff" stroke-width="1.6"/></svg>
<div style="left:1255px;top:463.5px;width:12px;height:2.5px;background:#595959;border-radius:3px 3px 0 0;"></div>
<div style="left:1059px;top:466px;width:221px;height:3px;background:#1d1d1d;"></div>
<div style="left:1px;top:469px;width:1278px;height:453px;background:#292929;border-radius:6px;"></div>
<div style="left:22px;top:517px;width:972px;height:31px;background:#333333;"></div>
<div style="left:22px;top:548px;width:972px;height:53.299999999999955px;background:#292929;"></div>
<div style="left:22px;top:601.3px;width:972px;height:53.40000000000009px;background:#333333;"></div>
<div style="left:22px;top:654.7px;width:972px;height:53.299999999999955px;background:#292929;"></div>
<div style="left:22px;top:708px;width:972px;height:53.299999999999955px;background:#333333;"></div>
<div style="left:22px;top:761.3px;width:972px;height:53.40000000000009px;background:#292929;"></div>
<div style="left:22px;top:814.7px;width:972px;height:53.299999999999955px;background:#333333;"></div>
<div style="left:22px;top:868px;width:972px;height:53px;background:#292929;"></div>
<div style="left:115.2px;top:517px;width:1px;height:404px;background:#303030"></div>
<div style="left:210.5px;top:517px;width:1px;height:404px;background:#303030"></div>
<div style="left:305.9px;top:517px;width:1px;height:404px;background:#303030"></div>
<div style="left:401.2px;top:517px;width:1px;height:404px;background:#303030"></div>
<div style="left:496.5px;top:517px;width:1px;height:404px;background:#303030"></div>
<div style="left:591.9px;top:517px;width:1px;height:404px;background:#303030"></div>
<div style="left:687.2px;top:517px;width:1px;height:404px;background:#303030"></div>
<div style="left:782.5px;top:517px;width:1px;height:404px;background:#303030"></div>
<div style="left:877.8px;top:517px;width:1px;height:404px;background:#303030"></div>
<div style="left:973.2px;top:517px;width:1px;height:404px;background:#303030"></div>
<div style="left:1px;top:517px;width:21px;height:404px;background:#282828;border-radius:0 0 0 6px;"></div>
<div class="t" style="left:-10px;top:515.1px;width:40px;font-size:11.2px;color:#d0d0d0;text-align:center;transform:rotate(-90deg);">7</div>
<div class="t" style="left:-10px;top:568.5px;width:40px;font-size:11.2px;color:#d0d0d0;text-align:center;transform:rotate(-90deg);">6</div>
<div class="t" style="left:-10px;top:622.3px;width:40px;font-size:11.2px;color:#d0d0d0;text-align:center;transform:rotate(-90deg);">5</div>
<div class="t" style="left:-10px;top:675.7px;width:40px;font-size:11.2px;color:#d0d0d0;text-align:center;transform:rotate(-90deg);">4</div>
<div class="t" style="left:-10px;top:728.9px;width:40px;font-size:11.2px;color:#d0d0d0;text-align:center;transform:rotate(-90deg);">3</div>
<div class="t" style="left:-10px;top:782.3px;width:40px;font-size:11.2px;color:#d0d0d0;text-align:center;transform:rotate(-90deg);">2</div>
<div class="t" style="left:-10px;top:835.7px;width:40px;font-size:11.2px;color:#d0d0d0;text-align:center;transform:rotate(-90deg);">1</div>
<div style="left:25px;top:763.5px;width:543.5px;height:50.10000000000002px;background:#a39600;"></div>
<div style="left:25px;top:763.5px;width:28px;height:50.10000000000002px;background:#978b00;"></div>
<div style="left:538.5px;top:763.5px;width:30px;height:50.10000000000002px;background:#978b00;"></div>
<svg style="left:25px;top:763.5px;" width="545" height="50.10000000000002" viewBox="0 0 545 50.10000000000002"><path d="M9 14.549999999999955 L18 25.049999999999955 L9 35.549999999999955Z" fill="#7a7000"/><path d="M533 14.549999999999955 L524 25.049999999999955 L533 35.549999999999955Z" fill="#7a7000"/></svg>
<div style="left:24px;top:763.0px;width:545px;height:51.10000000000002px;border:1px solid #f5f04a;"></div>
<div class="t" style="left:63.5px;top:783.51px;font-size:11.2px;color:#101010;">Example text | 1</div>
<div style="left:25px;top:818.5px;width:543.5px;height:48.200000000000045px;background:#858585;"></div>
<div style="left:25px;top:818.5px;width:28px;height:48.200000000000045px;background:#7a7a7a;"></div>
<div style="left:538.5px;top:818.5px;width:30px;height:48.200000000000045px;background:#7a7a7a;"></div>
<svg style="left:25px;top:818.5px;" width="545" height="48.200000000000045" viewBox="0 0 545 48.200000000000045"><path d="M9 13.600000000000023 L18 24.100000000000023 L9 34.60000000000002Z" fill="#666666"/><path d="M533 13.600000000000023 L524 24.100000000000023 L533 34.60000000000002Z" fill="#666666"/></svg>
<div style="left:24px;top:818.0px;width:545px;height:49.200000000000045px;border:1px solid #101010;"></div>
<div class="t" style="left:63.5px;top:836.66px;font-size:11.2px;color:#101010;">Color | 1</div>
<div style="left:25px;top:907px;width:969px;height:4px;background:#3f2f2c;"></div>
<div style="left:23px;top:494px;width:2px;height:427px;background:#5680c2;"></div>
<div style="left:8.5px;top:911.7px;width:976px;height:8.8px;background:#2e2e2e;border-radius:4.4px;border:1px solid #3a3a3a;"></div>
<div style="left:8.5px;top:911.7px;width:951.5px;height:8.8px;background:#676767;border-radius:4.4px;"></div>
<div style="left:9.7px;top:912.7px;width:6.6px;height:6.6px;border-radius:50%;background:#555555"></div>
<div style="left:952.5px;top:912.7px;width:6.6px;height:6.6px;border-radius:50%;background:#555555"></div>
<div style="left:982.8px;top:527px;width:8.4px;height:375px;background:#676767;border-radius:4.2px;"></div>
<div style="left:983.7px;top:527.9px;width:6.6px;height:6.6px;border-radius:50%;background:#555555"></div>
<div style="left:983.7px;top:894.5px;width:6.6px;height:6.6px;border-radius:50%;background:#555555"></div>
<div style="left:1px;top:469px;width:1278px;height:25px;background:#424242;border-radius:6px 6px 0 0;"></div>
<div style="left:9px;top:473px;width:29.75px;height:18px;background:#2b2b2b;border-radius:4px;border:1px solid #3a3a3a;"></div>
<svg style="left:9px;top:473px;" width="30" height="18" viewBox="0 0 30 18"><g transform="translate(0.3,-0.5)"><rect x="4.4" y="10.4" width="12.2" height="6" fill="#dcdcdc"/><path d="M7.5 9.1 H16.6" stroke="#dcdcdc" stroke-width="1"/><rect x="4" y="5" width="2" height="3.8" fill="none" stroke="#cfcfcf" stroke-width="1"/>
<g fill="#e6e6e6"><path d="M7.5 3.9 L9.6 3.4 L9.6 5.6 L7.5 6.1Z"/><path d="M10.5 2.8 L12.6 2.3 L12.6 4.5 L10.5 5Z"/><path d="M13.5 1.8 L15.6 1.3 L15.6 3.5 L13.5 4Z"/></g></g><path d="M20.10 7.30L23.50 10.80L26.90 7.30" fill="none" stroke="#bdbdbd" stroke-width="1.3"/></svg>
<div style="left:46px;top:473px;width:133px;height:18px;background:#2b2b2b;border-radius:4px;border:1px solid #3a3a3a;"></div>
<svg style="left:46px;top:473px;" width="133" height="18" viewBox="0 0 133 18"><g fill="#2b2b2b" stroke="#dcdcdc" stroke-width="1.1"><rect x="6.75" y="2.55" width="10.6" height="2.8" rx="0.6"/><rect x="4.65" y="5.65" width="10.8" height="2.8" rx="0.6"/><rect x="6.75" y="12.55" width="10.6" height="2.9" rx="0.6"/></g>
<path d="M123.60 7.30L127.00 10.80L130.40 7.30" fill="none" stroke="#bdbdbd" stroke-width="1.3"/></svg>
<div class="t" style="left:71.4px;top:475.86px;font-size:11.2px;color:#e6e6e6;">Sequencer</div>
<div class="t" style="left:192px;top:475.86px;font-size:11.2px;color:#dcdcdc;">View</div>
<div class="t" style="left:232.3px;top:475.86px;font-size:11.2px;color:#dcdcdc;">Select</div>
<div class="t" style="left:278.2px;top:475.86px;font-size:11.2px;color:#dcdcdc;">Marker</div>
<div class="t" style="left:328px;top:475.86px;font-size:11.2px;color:#dcdcdc;">Add</div>
<div class="t" style="left:361.9px;top:475.86px;font-size:11.2px;color:#dcdcdc;">Strip</div>
<div style="left:1253px;top:473px;width:18px;height:18.5px;background:#545454;border-radius:4px;"></div>
<svg style="left:1253px;top:473px;" width="18" height="19" viewBox="0 0 18 19"><g fill="none" stroke="#e6e6e6" stroke-width="1.1"><path d="M3 7.8 A6.5 6.5 0 0 1 15 7.3 M15.3 11.3 A6.5 6.5 0 0 1 3.3 11.8"/><path d="M15.7 2.8V7.8H10.7 M2.5 16.3V11.3H7.5"/></g></svg>
<div style="left:1px;top:494px;width:993px;height:23px;background:#292929;"></div>
<div class="t" style="left:52.125px;width:60px;top:499.66px;font-size:11.2px;color:#b8b8b8;text-align:center;letter-spacing:1px;text-indent:1px;">0+16</div>
<div class="t" style="left:115.72500000000002px;width:60px;top:499.66px;font-size:11.2px;color:#b8b8b8;text-align:center;letter-spacing:1px;text-indent:1px;">1+08</div>
<div class="t" style="left:179.32500000000002px;width:60px;top:499.66px;font-size:11.2px;color:#b8b8b8;text-align:center;letter-spacing:1px;text-indent:1px;">2+00</div>
<div class="t" style="left:242.925px;width:60px;top:499.66px;font-size:11.2px;color:#b8b8b8;text-align:center;letter-spacing:1px;text-indent:1px;">2+16</div>
<div class="t" style="left:306.52500000000003px;width:60px;top:499.66px;font-size:11.2px;color:#b8b8b8;text-align:center;letter-spacing:1px;text-indent:1px;">3+08</div>
<div class="t" style="left:370.125px;width:60px;top:499.66px;font-size:11.2px;color:#b8b8b8;text-align:center;letter-spacing:1px;text-indent:1px;">4+00</div>
<div class="t" style="left:433.725px;width:60px;top:499.66px;font-size:11.2px;color:#b8b8b8;text-align:center;letter-spacing:1px;text-indent:1px;">4+16</div>
<div class="t" style="left:497.32500000000005px;width:60px;top:499.66px;font-size:11.2px;color:#b8b8b8;text-align:center;letter-spacing:1px;text-indent:1px;">5+08</div>
<div class="t" style="left:560.9250000000001px;width:60px;top:499.66px;font-size:11.2px;color:#b8b8b8;text-align:center;letter-spacing:1px;text-indent:1px;">6+00</div>
<div class="t" style="left:624.525px;width:60px;top:499.66px;font-size:11.2px;color:#b8b8b8;text-align:center;letter-spacing:1px;text-indent:1px;">6+16</div>
<div class="t" style="left:688.125px;width:60px;top:499.66px;font-size:11.2px;color:#b8b8b8;text-align:center;letter-spacing:1px;text-indent:1px;">7+08</div>
<div class="t" style="left:751.725px;width:60px;top:499.66px;font-size:11.2px;color:#b8b8b8;text-align:center;letter-spacing:1px;text-indent:1px;">8+00</div>
<div class="t" style="left:815.325px;width:60px;top:499.66px;font-size:11.2px;color:#b8b8b8;text-align:center;letter-spacing:1px;text-indent:1px;">8+16</div>
<div class="t" style="left:878.9250000000001px;width:60px;top:499.66px;font-size:11.2px;color:#b8b8b8;text-align:center;letter-spacing:1px;text-indent:1px;">9+08</div>
<div class="t" style="left:942.525px;width:60px;top:499.66px;font-size:11.2px;color:#b8b8b8;text-align:center;letter-spacing:1px;text-indent:1px;">10+00</div>
<div style="left:3.5px;top:496.5px;width:40px;height:18.3px;background:#5680c2;border-radius:4.5px;"></div>
<div class="t" style="left:3.5px;width:40px;top:499.66px;font-size:11.2px;color:#ffffff;text-align:center;letter-spacing:1px;text-indent:1px;">0+01</div>
<div style="left:994px;top:494px;width:266px;height:427px;background:#3a3a3a;"></div>
<div style="left:1260px;top:494px;width:19px;height:427px;background:#232323;border-radius:0 0 6px 0;"></div>
<div style="left:1259.5px;top:500.7px;width:17px;height:32.900000000000034px;background:#424242;border-radius:0 4px 4px 0;"></div>
<div class="t" style="left:1251.5px;top:510.8px;width:32.900000000000034px;font-size:11.2px;color:#ffffff;text-align:center;transform:rotate(-90deg);">Strip</div>
<div style="left:1259.5px;top:537.5px;width:17px;height:58.0px;background:#2b2b2b;border-radius:0 4px 4px 0;"></div>
<div class="t" style="left:1239.0px;top:560.2px;width:58.0px;font-size:11.2px;color:#d0d0d0;text-align:center;transform:rotate(-90deg);">Modifiers</div>
<div style="left:1259.5px;top:601px;width:17px;height:82px;background:#2b2b2b;border-radius:0 4px 4px 0;"></div>
<div class="t" style="left:1227.0px;top:635.7px;width:82px;font-size:11.2px;color:#d0d0d0;text-align:center;transform:rotate(-90deg);">Proxy &amp; Cache</div>
<div style="left:1259.5px;top:691.4px;width:17px;height:30.600000000000023px;background:#2b2b2b;border-radius:0 4px 4px 0;"></div>
<div class="t" style="left:1252.7px;top:700.4px;width:30.600000000000023px;font-size:11.2px;color:#d0d0d0;text-align:center;transform:rotate(-90deg);">View</div>
<div style="left:994px;top:494px;width:266px;height:60px;background:#424242;"></div>
<svg style="left:1003px;top:503px;" width="20" height="18" viewBox="0 0 20 18"><path d="M13.5 15.5 V8.5 Q13.5 4.5 9.5 4.5 Q6.3 4.5 5.5 6.8 M13.5 9.8 Q5 9.5 5 13 Q5 15.8 8.5 15.8 Q12 15.8 13.5 12.5 M13.5 15.5 Q14 15.8 15.5 15.5" fill="none" stroke="#dcdcdc" stroke-width="1"/></svg>
<div style="left:1031px;top:503px;width:191.7px;height:17.8px;background:#1d1d1d;border-radius:4px;"></div>
<div class="t" style="left:1038.5px;top:505.86px;font-size:11.2px;color:#e6e6e6;">Text</div>
<div style="left:1237px;top:507px;width:10px;height:10px;background:#e0e0e0;border-radius:2.5px;"></div>
<svg style="left:1237px;top:507px;" width="10" height="10" viewBox="0 0 10 10"><path d="M2 5.2 L4.2 7.3 L8.2 2.8" fill="none" stroke="#333" stroke-width="1.6"/></svg>
<svg style="left:1003.2px;top:538.3px;" width="9" height="9" viewBox="0 0 9 9"><path d="M0.3 0.5 H6.9 L3.6 6.5Z" fill="#b4b4b4"/></svg>
<div class="t" style="left:1016.5px;top:536.30px;font-size:12.6px;color:#e6e6e6;">Adjust</div>
<svg style="left:1240px;top:540px;" width="12" height="6" viewBox="0 0 12 6"><rect x="0.0" y="0" width="1.4" height="1.4" fill="#1a1a1a"/><rect x="0.0" y="3" width="1.4" height="1.4" fill="#1a1a1a"/><rect x="2.8" y="0" width="1.4" height="1.4" fill="#1a1a1a"/><rect x="2.8" y="3" width="1.4" height="1.4" fill="#1a1a1a"/><rect x="5.6" y="0" width="1.4" height="1.4" fill="#1a1a1a"/><rect x="5.6" y="3" width="1.4" height="1.4" fill="#1a1a1a"/><rect x="8.399999999999999" y="0" width="1.4" height="1.4" fill="#1a1a1a"/><rect x="8.399999999999999" y="3" width="1.4" height="1.4" fill="#1a1a1a"/></svg>
<div style="left:994px;top:554px;width:266px;height:24px;background:#383838;"></div>
<svg style="left:1017.2px;top:562.8px;" width="9" height="9" viewBox="0 0 9 9"><path d="M0.3 0.5 H6.9 L3.6 6.5Z" fill="#b4b4b4"/></svg>
<div class="t" style="left:1030px;top:560.86px;font-size:11.2px;color:#e6e6e6;">Compositing</div>
<div style="left:994px;top:578px;width:266px;height:57px;background:#2e2e2e;"></div>
<div class="t" style="right:171.5px;top:590.06px;font-size:11.2px;color:#e0e0e0;text-align:right;">Blend</div>
<div style="left:1117.5px;top:586.4px;width:114.20000000000005px;height:19.200000000000045px;background:#282828;border-radius:4px;border:1px solid #353535;"></div>
<div class="t" style="left:1125.5px;top:590.06px;font-size:11.2px;color:#e6e6e6;">Alpha Over</div>
<svg style="left:1218.7px;top:591.0px;" width="12" height="10" viewBox="0 0 12 10"><path d="M1.60 2.80L5.00 6.30L8.40 2.80" fill="none" stroke="#bdbdbd" stroke-width="1.3"/></svg>
<div style="left:1239.8px;top:593.9px;width:4.2px;height:4.2px;border-radius:50%;background:#d0d0d0;"></div>
<div class="t" style="right:171.5px;top:612.16px;font-size:11.2px;color:#e0e0e0;text-align:right;">Opacity</div>
<div style="left:1118px;top:609.2px;width:113px;height:17.799999999999955px;background:#5680c2;border-radius:4px;"></div>
<div class="t" style="left:1118.0px;width:113px;top:612.16px;font-size:11.2px;color:#e6e6e6;text-align:center;letter-spacing:0.6px;">1.000</div>
<div style="left:1239.8px;top:615.9px;width:4.2px;height:4.2px;border-radius:50%;background:#d0d0d0;"></div>
<div style="left:994px;top:635px;width:266px;height:25px;background:#424242;"></div>
<svg style="left:1003.2px;top:643.8px;" width="9" height="9" viewBox="0 0 9 9"><path d="M0.3 0.5 H6.9 L3.6 6.5Z" fill="#b4b4b4"/></svg>
<div class="t" style="left:1016.5px;top:642.00px;font-size:12.6px;color:#e6e6e6;">Effect Strip</div>
<svg style="left:1240px;top:645.5px;" width="12" height="6" viewBox="0 0 12 6"><rect x="0.0" y="0" width="1.4" height="1.4" fill="#1a1a1a"/><rect x="0.0" y="3" width="1.4" height="1.4" fill="#1a1a1a"/><rect x="2.8" y="0" width="1.4" height="1.4" fill="#1a1a1a"/><rect x="2.8" y="3" width="1.4" height="1.4" fill="#1a1a1a"/><rect x="5.6" y="0" width="1.4" height="1.4" fill="#1a1a1a"/><rect x="5.6" y="3" width="1.4" height="1.4" fill="#1a1a1a"/><rect x="8.399999999999999" y="0" width="1.4" height="1.4" fill="#1a1a1a"/><rect x="8.399999999999999" y="3" width="1.4" height="1.4" fill="#1a1a1a"/></svg>
<div style="left:994px;top:660px;width:266px;height:261px;background:#3a3a3a;"></div>
<div class="t" style="right:171.5px;top:671.86px;font-size:11.2px;color:#e0e0e0;text-align:right;">Text</div>
<div style="left:1118px;top:668.9px;width:113px;height:17.8px;background:#1d1d1d;border-radius:4px;"></div>
<div class="t" style="left:1125.5px;top:671.86px;font-size:11.2px;color:#e6e6e6;">Example text</div>
<div style="left:1003px;top:691.4px;width:30px;height:17.8px;background:#282828;border-radius:4px 0 0 4px;border:1px solid #353535;"></div>
<div class="t" style="left:1007px;top:692.47px;font-size:15.5px;color:#e6e6e6;font-family:'Liberation Serif',serif;">F</div>
<svg style="left:1022px;top:696px;" width="10" height="10" viewBox="0 0 10 10"><path d="M0.80 2.80L4.20 6.30L7.60 2.80" fill="none" stroke="#bdbdbd" stroke-width="1.3"/></svg>
<div style="left:1033px;top:691.4px;width:158.4px;height:17.8px;background:#1d1d1d;"></div>
<div class="t" style="left:1041px;top:694.36px;font-size:11.2px;color:#e6e6e6;">ComicSansMS</div>
<div style="left:1191.4px;top:691.4px;width:20px;height:17.8px;background:#545454;"></div>
<svg style="left:1191.4px;top:691.4px;" width="20" height="18" viewBox="0 0 20 18"><path d="M10 3 Q13 4.5 15.5 4.5 V9 Q15.5 13.5 10 15.5 Q4.5 13.5 4.5 9 V4.5 Q7 4.5 10 3Z" fill="none" stroke="#a8a8a8" stroke-width="1"/></svg>
<div style="left:1212px;top:691.4px;width:19.2px;height:17.8px;background:#545454;"></div>
<svg style="left:1212px;top:691.4px;" width="20" height="18" viewBox="0 0 20 18"><path d="M3.5 4 H8 L9 5 H13 V7 H6.5 V14 H3.5Z" fill="#dcdcdc"/><path d="M5 15 Q6 8 6.5 8 H15.8 V14 Q15.8 15 14.8 15Z" fill="#dcdcdc" stroke="#545454" stroke-width="0.6"/></svg>
<div style="left:1231.8px;top:691.4px;width:19px;height:17.8px;background:#545454;border-radius:0 4px 4px 0;"></div>
<svg style="left:1231.8px;top:691.4px;" width="19" height="18" viewBox="0 0 19 18"><path d="M5 4.5 L14 13.5 M14 4.5 L5 13.5" stroke="#dcdcdc" stroke-width="1.1"/></svg>
<div class="t" style="right:171.5px;top:716.26px;font-size:11.2px;color:#e0e0e0;text-align:right;">Size</div>
<div style="left:1118px;top:713.4px;width:112.79999999999995px;height:17.600000000000023px;background:#545454;border-radius:4px;"></div>
<div class="t" style="left:1118.0px;width:112.79999999999995px;top:716.26px;font-size:11.2px;color:#e6e6e6;text-align:center;letter-spacing:0.6px;">250</div>
<div style="left:1239.8px;top:719.9px;width:4.2px;height:4.2px;border-radius:50%;background:#d0d0d0;"></div>
<div class="t" style="right:171.5px;top:738.26px;font-size:11.2px;color:#e0e0e0;text-align:right;">Color</div>
<div style="left:1118px;top:735px;width:112.8px;height:18px;background:#ffffff;border-radius:4px;"></div>
<div style="left:1239.8px;top:741.9px;width:4.2px;height:4.2px;border-radius:50%;background:#d0d0d0;"></div>
<div class="t" style="right:202.5px;top:760.26px;font-size:11.2px;color:#e0e0e0;text-align:right;">Shadow</div>
<div style="left:1087px;top:760.3px;width:12px;height:11.5px;background:#595959;border-radius:3px;"></div>
<div style="left:1239.8px;top:763.9px;width:4.2px;height:4.2px;border-radius:50%;background:#cfcfcf;"></div>
<div style="left:1110.9px;top:763.9px;width:4.2px;height:4.2px;border-radius:50%;background:#cfcfcf;"></div>
<div style="left:1132px;top:757.2px;width:99px;height:18px;background:#1d1d1d;border-radius:4px;"></div>
<div style="left:1239.8px;top:763.9px;width:4.2px;height:4.2px;border-radius:50%;background:#7a7a7a;"></div>
<div class="t" style="right:171.5px;top:782.16px;font-size:11.2px;color:#e0e0e0;text-align:right;">Align X</div>
<div style="left:1117.5px;top:779px;width:113.5px;height:18.200000000000045px;background:#282828;border-radius:4px;border:1px solid #353535;"></div>
<div class="t" style="left:1125.5px;top:782.16px;font-size:11.2px;color:#e6e6e6;">Center</div>
<svg style="left:1218px;top:783.1px;" width="12" height="10" viewBox="0 0 12 10"><path d="M1.60 2.80L5.00 6.30L8.40 2.80" fill="none" stroke="#bdbdbd" stroke-width="1.3"/></svg>
<div style="left:1239.8px;top:785.9px;width:4.2px;height:4.2px;border-radius:50%;background:#d0d0d0;"></div>
<div class="t" style="right:171.5px;top:804.16px;font-size:11.2px;color:#e0e0e0;text-align:right;">Y</div>
<div style="left:1117.5px;top:801px;width:113.5px;height:18.200000000000045px;background:#282828;border-radius:4px;border:1px solid #353535;"></div>
<div class="t" style="left:1125.5px;top:804.16px;font-size:11.2px;color:#e6e6e6;">Center</div>
<svg style="left:1218px;top:805.1px;" width="12" height="10" viewBox="0 0 12 10"><path d="M1.60 2.80L5.00 6.30L8.40 2.80" fill="none" stroke="#bdbdbd" stroke-width="1.3"/></svg>
<div style="left:1239.8px;top:807.9px;width:4.2px;height:4.2px;border-radius:50%;background:#d0d0d0;"></div>
<div class="t" style="right:171.5px;top:826.16px;font-size:11.2px;color:#e0e0e0;text-align:right;">Location X</div>
<div style="left:1118px;top:822.8px;width:112.79999999999995px;height:18.200000000000045px;background:#545454;border-radius:4px 4px 0 0;"></div>
<div class="t" style="left:1118.0px;width:112.79999999999995px;top:825.96px;font-size:11.2px;color:#e6e6e6;text-align:center;letter-spacing:0.6px;">0.50</div>
<div style="left:1239.8px;top:829.9px;width:4.2px;height:4.2px;border-radius:50%;background:#d0d0d0;"></div>
<div class="t" style="right:171.5px;top:845.26px;font-size:11.2px;color:#e0e0e0;text-align:right;">Y</div>
<div style="left:1118px;top:842px;width:112.79999999999995px;height:18.700000000000045px;background:#545454;border-radius:0 0 4px 4px;"></div>
<div class="t" style="left:1118.0px;width:112.79999999999995px;top:845.41px;font-size:11.2px;color:#e6e6e6;text-align:center;letter-spacing:0.6px;">0.50</div>
<div style="left:1239.8px;top:848.9px;width:4.2px;height:4.2px;border-radius:50%;background:#d0d0d0;"></div>
<div class="t" style="right:171.5px;top:868.26px;font-size:11.2px;color:#e0e0e0;text-align:right;">Wrap Width</div>
<div style="left:1118px;top:865.4px;width:112.79999999999995px;height:17.899999999999977px;background:#545454;border-radius:4px;"></div>
<div class="t" style="left:1118.0px;width:112.79999999999995px;top:868.41px;font-size:11.2px;color:#e6e6e6;text-align:center;letter-spacing:0.6px;">1.00</div>
<div style="left:1239.8px;top:871.9px;width:4.2px;height:4.2px;border-radius:50%;background:#d0d0d0;"></div>
<div style="left:1003px;top:890px;width:247.5px;height:17.5px;background:#545454;border-radius:4px;"></div>
<svg style="left:1005px;top:890px;" width="18" height="18" viewBox="0 0 18 18"><path d="M9 12 V3.5 M5.5 7 L9 3.5 L12.5 7 M3 10 V15 H15 V10" fill="none" stroke="#dcdcdc" stroke-width="1"/></svg>
<div class="t" style="left:1035.0px;width:200px;top:893.16px;font-size:11.2px;color:#e6e6e6;text-align:center;">Export Subtitles</div>
<div style="left:1px;top:925px;width:1278px;height:24.5px;background:#393939;border-radius:6px;"></div>
<div style="left:9px;top:929px;width:30.4px;height:18px;background:#282828;border-radius:4px;border:1px solid #363636;"></div>
<svg style="left:9px;top:929px;" width="31" height="18" viewBox="0 0 31 18"><circle cx="10.2" cy="9" r="6.3" fill="#e6e6e6"/><path d="M11.8 5.5 L8.8 9 L11.8 12.5" fill="none" stroke="#282828" stroke-width="1.6"/>
<path d="M20.10 7.30L23.50 10.80L26.90 7.30" fill="none" stroke="#bdbdbd" stroke-width="1.3"/></svg>
<div style="left:46px;top:929px;width:127.2px;height:18px;background:#282828;border-radius:4px;border:1px solid #363636;"></div>
<div style="left:114px;top:929px;width:1px;height:18px;background:#363636;"></div>
<div class="t" style="left:53.1px;top:931.66px;font-size:11.2px;color:#e6e6e6;">Playback</div>
<svg style="left:100px;top:932px;" width="12" height="12" viewBox="0 0 12 12"><path d="M1.60 3.80L5.00 7.30L8.40 3.80" fill="none" stroke="#bdbdbd" stroke-width="1.3"/></svg>
<div class="t" style="left:122px;top:931.66px;font-size:11.2px;color:#e6e6e6;">Keying</div>
<svg style="left:159px;top:932px;" width="12" height="12" viewBox="0 0 12 12"><path d="M1.60 3.80L5.00 7.30L8.40 3.80" fill="none" stroke="#bdbdbd" stroke-width="1.3"/></svg>
<div class="t" style="left:181px;top:931.66px;font-size:11.2px;color:#dcdcdc;">View</div>
<div class="t" style="left:221.5px;top:931.66px;font-size:11.2px;color:#dcdcdc;">Marker</div>
<div style="left:558.3px;top:929px;width:18px;height:18px;background:#545454;border-radius:4px;"></div>
<div style="left:562.8px;top:933.5px;width:9px;height:9px;border-radius:50%;background:#e6e6e6"></div>
<div style="left:583px;top:929px;width:118px;height:18px;background:#545454;border-radius:4px;"></div>
<div style="left:602.67px;top:929px;width:1px;height:18px;background:#464646;"></div>
<div style="left:622.34px;top:929px;width:1px;height:18px;background:#464646;"></div>
<div style="left:642.01px;top:929px;width:1px;height:18px;background:#464646;"></div>
<div style="left:661.6800000000001px;top:929px;width:1px;height:18px;background:#464646;"></div>
<div style="left:681.35px;top:929px;width:1px;height:18px;background:#464646;"></div>
<svg style="left:583px;top:929px;" width="118" height="18" viewBox="0 0 118 18"><g fill="#e6e6e6">
<rect x="4.1" y="4.2" width="1.8" height="9.6"/><path d="M13 4.3 L7.6 9 L13 13.7Z"/>
<path d="M19.6 9 L23.4 4.8 L27.2 9 L23.4 13.2Z"/><path d="M35.2 4.6 L30.2 9 L35.2 13.4Z"/>
<path d="M52.6 3.4 L43.2 9 L52.6 14.6Z"/>
<path d="M62.6 3.4 L72.8 9 L62.6 14.6Z"/>
<path d="M79.9 4.6 L84.9 9 L79.9 13.4Z"/><path d="M86.2 9 L90 4.8 L93.8 9 L90 13.2Z"/>
<path d="M103.2 4.3 L108.6 9 L103.2 13.7Z"/><rect x="111.4" y="4.2" width="1.8" height="9.6"/></g></svg>
<div style="left:990px;top:929.3px;width:73px;height:17.5px;background:#545454;border-radius:4px;"></div>
<div class="t" style="left:996.5px;width:60px;top:931.86px;font-size:11.2px;color:#e6e6e6;text-align:center;letter-spacing:0.6px;">1</div>
<div style="left:1070px;top:929.3px;width:190px;height:17.5px;background:#545454;border-radius:4px;"></div>
<div style="left:1070px;top:929.3px;width:18px;height:17.5px;background:#474747;border-radius:4px 0 0 4px;"></div>
<div style="left:1088px;top:929.3px;width:1px;height:17.5px;background:#464646;"></div>
<div style="left:1176.3px;top:929.3px;width:1px;height:17.5px;background:#464646;"></div>
<svg style="left:1070px;top:929.3px;" width="18" height="18" viewBox="0 0 18 18"><circle cx="9" cy="10" r="5.3" fill="none" stroke="#dcdcdc" stroke-width="1.1"/><path d="M9 10 L11 7.3 M7 3.5 H11 M14 4.5 L15.5 6" stroke="#dcdcdc" stroke-width="1.1"/></svg>
<div class="t" style="left:1104.3px;top:931.86px;font-size:11.2px;color:#e6e6e6;">Start:</div>
<div class="t" style="right:117.5px;top:931.86px;font-size:11.2px;color:#e6e6e6;text-align:right;letter-spacing:0.6px;">1</div>
<div class="t" style="left:1192.3px;top:931.86px;font-size:11.2px;color:#e6e6e6;">End:</div>
<div class="t" style="right:32.5px;top:931.86px;font-size:11.2px;color:#e6e6e6;text-align:right;letter-spacing:0.6px;">250</div>
<div style="left:0px;top:950.5px;width:1280px;height:20.5px;background:#303030;"></div>
<svg style="left:11.8px;top:953.7px;" width="11" height="15" viewBox="0 0 11 15"><rect x="1" y="0.8" width="8.5" height="13" rx="3.3" fill="none" stroke="#c8c8c8" stroke-width="1"/><path d="M1.5 5.5 V3.5 Q1.5 1.5 3.5 1.2 H5 V5.5Z" fill="#c8c8c8"/></svg>
<div class="t" style="left:34.4px;top:954.66px;font-size:11.2px;color:#c0c0c0;">Scroller Activate</div>
<svg style="left:128px;top:953.7px;" width="11" height="15" viewBox="0 0 11 15"><rect x="1" y="0.8" width="8.5" height="13" rx="3.3" fill="none" stroke="#c8c8c8" stroke-width="1"/><path d="M1.5 5.5 V3.5 Q1.5 1.5 3.5 1.2 H5 V5.5Z" fill="#c8c8c8"/></svg>
<svg style="left:140px;top:953px;" width="6" height="12" viewBox="0 0 6 12"><path d="M1 1.5 V9 M4 3 V7.5" stroke="#c8c8c8" stroke-width="1"/></svg>
<div class="t" style="left:152.5px;top:954.66px;font-size:11.2px;color:#c0c0c0;">Box Select</div>
<svg style="left:248.5px;top:953.7px;" width="11" height="15" viewBox="0 0 11 15"><rect x="1" y="0.8" width="8.5" height="13" rx="3.3" fill="none" stroke="#c8c8c8" stroke-width="1"/><rect x="4.3" y="2.5" width="1.6" height="3.5" fill="#c8c8c8"/></svg>
<div class="t" style="left:270px;top:954.66px;font-size:11.2px;color:#c0c0c0;">Scroller Activate</div>
<svg style="left:484px;top:953.7px;" width="11" height="15" viewBox="0 0 11 15"><rect x="1" y="0.8" width="8.5" height="13" rx="3.3" fill="none" stroke="#c8c8c8" stroke-width="1"/><path d="M5.5 5.5 V1.2 H7 Q9 1.5 9 3.5 V5.5Z" fill="#c8c8c8"/></svg>
<div class="t" style="left:506px;top:954.66px;font-size:11.2px;color:#c0c0c0;">Sequencer Context Menu</div>
<div class="t" style="right:30px;top:954.66px;font-size:11.2px;color:#c0c0c0;text-align:right;letter-spacing:0.1px;">Collection 1 | Verts:0 | Faces:0 | Tris:0 | Objects:0/1 | Mem: 67.9 MB | v2.80.74</div>
</body></html>
